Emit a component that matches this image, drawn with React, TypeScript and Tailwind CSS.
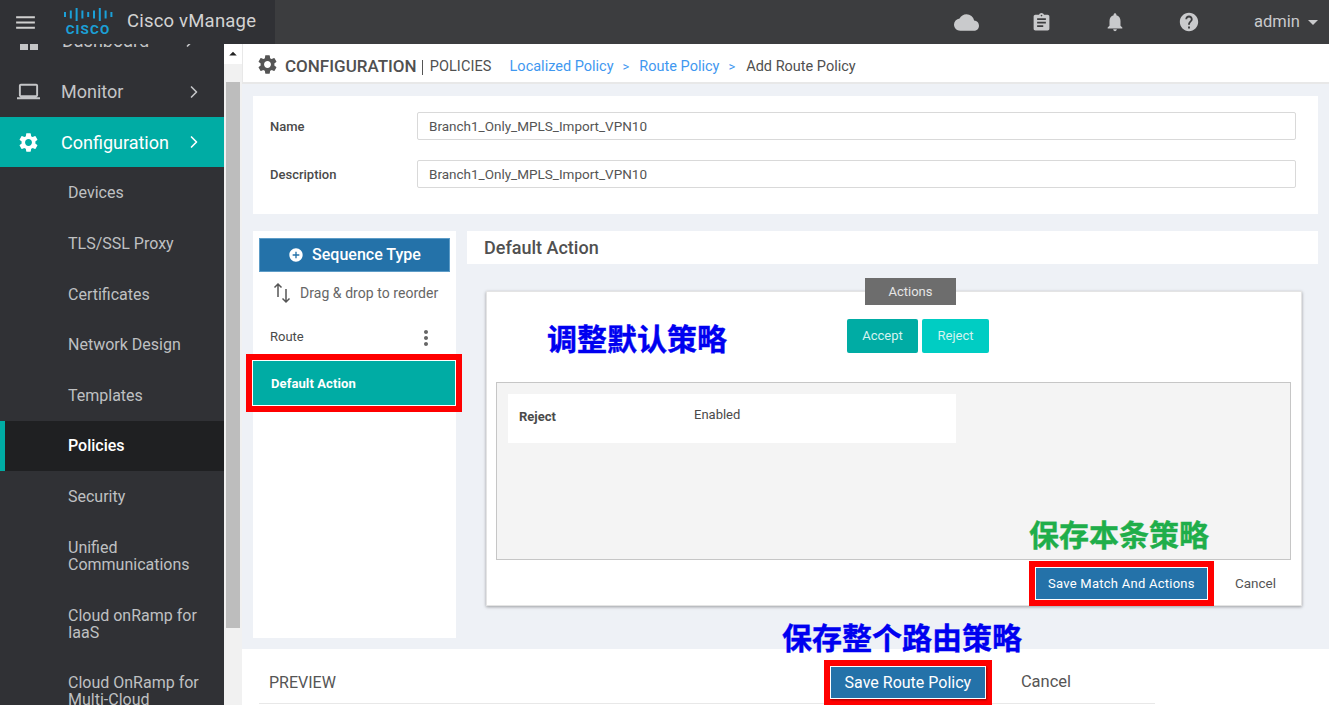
import { ChevronRight } from 'lucide-react'
import {
  MdAddCircle,
  MdArrowDropUp,
  MdAssignment,
  MdCloud,
  MdDashboard,
  MdHelp,
  MdLaptop,
  MdMenu,
  MdMoreVert,
  MdNotifications,
  MdSettings,
  MdArrowDropDown,
} from 'react-icons/md'

const subItems = [
  { label: 'Devices', h: 'h-[50px]' },
  { label: 'TLS/SSL Proxy', h: 'h-[51px]' },
  { label: 'Certificates', h: 'h-[51px]' },
  { label: 'Network Design', h: 'h-[50px]' },
  { label: 'Templates', h: 'h-[51px]' },
  { label: 'Policies', h: 'h-[50px]', active: true },
  { label: 'Security', h: 'h-[51px]' },
]

const twoLine = [
  { lines: ['Unified', 'Communications'], h: 'h-[68px]' },
  { lines: ['Cloud onRamp for', 'IaaS'], h: 'h-[67px]' },
  { lines: ['Cloud OnRamp for', 'Multi-Cloud'], h: 'h-[68px]' },
]

function CiscoLogo() {
  const bars = [5, 8, 13, 8, 5, 8, 13, 8, 5]
  return (
    <div className="-mt-[3px] flex w-[50px] flex-col items-center">
      <svg width="50" height="15" viewBox="0 0 50 15">
        {bars.map((b, i) => (
          <rect key={i} x={1 + i * 5.8} y={(15 - b) / 2} width="2" height={b} fill="#1ba0d7" />
        ))}
      </svg>
      <span className="mt-[1px] text-[13.5px] leading-[12px] font-bold tracking-[1.1px] text-[#1ba0d7] uppercase">cisco</span>
    </div>
  )
}

function SavePair({ label, className }: { label: string; className: string }) {
  return (
    <div className="border-[6px] border-[#ff0000]">
      <button className={`block border border-white bg-[#2472a9] text-white ${className}`}>{label}</button>
    </div>
  )
}

function Sidebar() {
  return (
    <aside className="h-full w-[224px] shrink-0 overflow-hidden bg-[#303135]">
      <div className="-mt-[31px]">
        <div className="flex h-[55px] items-center pr-[24px] pl-[17px] text-[#c4c5c7]">
          <MdDashboard size={24} />
          <span className="ml-[21px] flex-1 text-[18px]">Dashboard</span>
          <ChevronRight size={20} />
        </div>
        <div className="mb-[2px] flex h-[47px] items-center pr-[20px] pl-[17px] text-[#c4c5c7]">
          <MdLaptop size={23} />
          <span className="ml-[21px] flex-1 text-[18px]">Monitor</span>
          <ChevronRight size={20} />
        </div>
        <div className="flex h-[50px] items-center bg-[#00aca4] pr-[20px] pl-[17px] text-white">
          <MdSettings size={23} />
          <span className="ml-[21px] flex-1 text-[18px]">Configuration</span>
          <ChevronRight size={20} />
        </div>
        <div className="mt-[1px]">
          {subItems.map((s) => (
            <div
              key={s.label}
              className={`flex items-center text-[16px] ${s.h} ${
                s.active
                  ? 'border-l-[5px] border-[#00aca4] bg-[#1f2022] pl-[63px] font-medium text-white'
                  : 'pl-[68px] text-[#bfc0c2]'
              }`}
            >
              {s.label}
            </div>
          ))}
          {twoLine.map((s) => (
            <div key={s.lines[0]} className={`flex flex-col justify-center pl-[68px] text-[16px] leading-[17px] text-[#bfc0c2] ${s.h}`}>
              <span>{s.lines[0]}</span>
              <span>{s.lines[1]}</span>
            </div>
          ))}
        </div>
      </div>
    </aside>
  )
}

function FormRow({ label, mt }: { label: string; mt: string }) {
  return (
    <div className={`flex items-center ${mt}`}>
      <span className="mt-[1px] w-[147px] text-[13px] font-medium text-[#4a4a4a]">{label}</span>
      <div className="flex h-[28px] flex-1 items-center rounded-[2px] border border-[#d9d9d9] bg-white pl-[11px] text-[13.5px] text-[#555]">
        Branch1_Only_MPLS_Import_VPN10
      </div>
    </div>
  )
}

function SequencePanel() {
  return (
    <div className="h-[407px] w-[203px] shrink-0 bg-white pt-[7px]">
      <button className="mx-[6px] flex h-[34px] w-[191px] items-center justify-center gap-[8px] border border-[#5d9cc7] bg-[#2472a9] text-[16px] font-medium text-white">
        <MdAddCircle size={16} />
        Sequence Type
      </button>
      <div className="flex h-[42px] items-center pl-[20px] text-[#666]">
        <svg width="18" height="22" viewBox="0 0 18 22" fill="none" stroke="#555" strokeWidth="1.5">
          <path d="M5 15V2M1.500 5.500 5 2l3.500 3.500M13 7v13M9.500 16.500 13 20l3.500-3.500" />
        </svg>
        <span className="ml-[9px] text-[14px] tracking-[0.05px]">Drag &amp; drop to reorder</span>
      </div>
      <div className="flex h-[40px] items-center justify-between pr-[19px] pl-[17px] text-[13px] text-[#4a4a4a]">
        <span className="mt-[6px]">Route</span>
        <MdMoreVert size={24} className="mt-[7px] -mr-[1px] text-[#666]" />
      </div>
      <div className="relative -mr-[6px] -ml-[7px] border-[6px] border-[#ff0000]">
        <div className="flex h-[46px] items-center border border-white bg-[#00aca4] pt-[1px] pl-[18px] text-[13px] font-bold tracking-[0.1px] text-white">
          Default Action
        </div>
      </div>
    </div>
  )
}

function ActionCard() {
  return (
    <div className="relative mt-[27px] mr-[16px] ml-[19px] h-[315px] border border-[#e4e4e4] bg-white pr-[10px] pl-[9px] shadow-[0_1px_3px_rgba(0,0,0,0.35)]">
      <div className="absolute top-[-14px] left-[378px] flex h-[27px] w-[91px] items-center justify-center bg-[#6d6d6d] text-[13px] text-[#e6e6e6]">
        Actions
      </div>
      <div className="flex h-[90px] items-start pt-[27px] pl-[351px]">
        <button className="h-[34px] w-[71px] rounded-[2px] bg-[#00aca4] text-[13px] text-[#d5f3f0]">Accept</button>
        <button className="ml-[4px] h-[34px] w-[67px] rounded-[2px] bg-[#00cdc3] text-[13px] text-[#d5f3f0]">Reject</button>
      </div>
      <div className="h-[178px] border border-[#c6c6c6] bg-[#f4f4f4] p-[11px]">
        <div className="flex h-[49px] w-[448px] bg-white pt-[13px] pl-[11px] text-[13px] text-[#4a4a4a]">
          <span className="w-[175px] font-bold">Reject</span>
          <span className="-mt-[2px]">Enabled</span>
        </div>
      </div>
      <div className="mt-[1px] flex items-center justify-end">
        <SavePair label="Save Match And Actions" className="h-[33px] w-[173px] text-[13px] tracking-[0.25px]" />
        <span className="mr-[15px] ml-[21px] text-[13.5px] text-[#555]">Cancel</span>
      </div>
    </div>
  )
}

export default function App() {
  return (
    <div className="relative flex h-[705px] w-[1329px] flex-col overflow-hidden bg-[#eef1f6] font-['Roboto','Noto_Sans_CJK_SC',sans-serif]">
      <header className="z-10 flex h-[44px] shrink-0 items-center bg-[#3c3d3f] text-[#c9cacc]">
        <div className="flex h-full w-[275px] items-center bg-[#303135] pl-[13px]">
          <MdMenu size={25} className="text-[#cfcfcf]" />
          <div className="ml-[25px]">
            <CiscoLogo />
          </div>
          <span className="ml-[14px] text-[18.5px] tracking-[0.2px] text-[#d3d3d3]">Cisco vManage</span>
        </div>
        <div className="flex flex-1 items-center">
          <MdCloud size={25} className="ml-[679px]" />
          <MdAssignment size={21} className="ml-[52px]" />
          <MdNotifications size={22} className="ml-[52px]" />
          <MdHelp size={22} className="ml-[52px]" />
          <span className="ml-[54px] text-[16.5px]">admin</span>
          <MdArrowDropDown size={24} className="ml-[1px]" />
        </div>
      </header>

      <div className="flex min-h-0 flex-1">
        <Sidebar />

        <div className="relative flex w-[18px] shrink-0 flex-col bg-[#f1f1f1]">
          <div className="flex h-[20px] justify-center bg-white text-[#222]">
            <MdArrowDropUp size={20} />
          </div>
          <div className="mt-[18px] ml-[2px] h-[546px] w-[14px] bg-[#bdbdbd]" />
        </div>

        <main className="flex min-w-0 flex-1 flex-col">
          <div className="flex h-[40px] shrink-0 items-center border-b-2 border-l border-[#e8e8e8] bg-white pt-[8px] pl-[13px]">
            <MdSettings size={23} className="-mt-[6px] text-[#555]" />
            <span className="ml-[6px] text-[17px] font-medium text-[#505050]">CONFIGURATION</span>
            <span className="ml-[5px] h-[15px] border-l border-[#555]" />
            <span className="ml-[7px] text-[14.5px] tracking-[0.1px] text-[#505050]">POLICIES</span>
            <span className="ml-[18px] text-[14.5px] text-[#3f98f0]">Localized Policy</span>
            <span className="ml-[9px] text-[13px] text-[#3f98f0]">&gt;</span>
            <span className="ml-[10px] text-[14.5px] text-[#3f98f0]">Route Policy</span>
            <span className="ml-[9px] text-[13px] text-[#3f98f0]">&gt;</span>
            <span className="ml-[11px] text-[14.5px] text-[#4f4f4f]">Add Route Policy</span>
          </div>

          <div className="flex flex-1 flex-col px-[11px]">
            <section className="mt-[12px] h-[118px] bg-white pt-[16px] pr-[22px] pl-[17px]">
              <FormRow label="Name" mt="" />
              <FormRow label="Description" mt="mt-[20px]" />
            </section>

            <div className="mt-[17px] flex gap-[11px]">
              <SequencePanel />
              <div className="min-w-0 flex-1">
                <div className="flex h-[33px] items-center bg-white pl-[17px] text-[18px] font-medium text-[#505050]">
                  Default Action
                </div>
                <ActionCard />
              </div>
            </div>
          </div>

          <footer className="relative mt-[11px] flex h-[56px] shrink-0 items-center bg-white pt-[11px] pl-[27px]">
            <span className="text-[16px] text-[#555]">PREVIEW</span>
            <div className="relative z-10 ml-[488px]">
              <SavePair label="Save Route Policy" className="h-[33px] w-[156px] text-[16px] shadow-[1px_1px_2px_rgba(0,0,0,0.4)]" />
            </div>
            <span className="ml-[29px] text-[16.5px] text-[#555]">Cancel</span>
            <div className="absolute right-[174px] bottom-[1px] left-[17px] border-b border-[#e8e8e8]" />
          </footer>
        </main>
      </div>

      <span className="absolute top-[322px] left-[547px] text-[30px] leading-[36px] font-bold text-[#0000f0] [-webkit-text-stroke:0.4px_#0000f0]">调整默认策略</span>
      <span className="absolute top-[518px] left-[1029px] text-[30px] leading-[36px] font-bold text-[#1fae4a] [-webkit-text-stroke:0.4px_#1fae4a]">保存本条策略</span>
      <span className="absolute top-[621px] left-[782px] text-[30px] leading-[36px] font-bold text-[#0000f0] [-webkit-text-stroke:0.4px_#0000f0]">保存整个路由策略</span>
    </div>
  )
}
